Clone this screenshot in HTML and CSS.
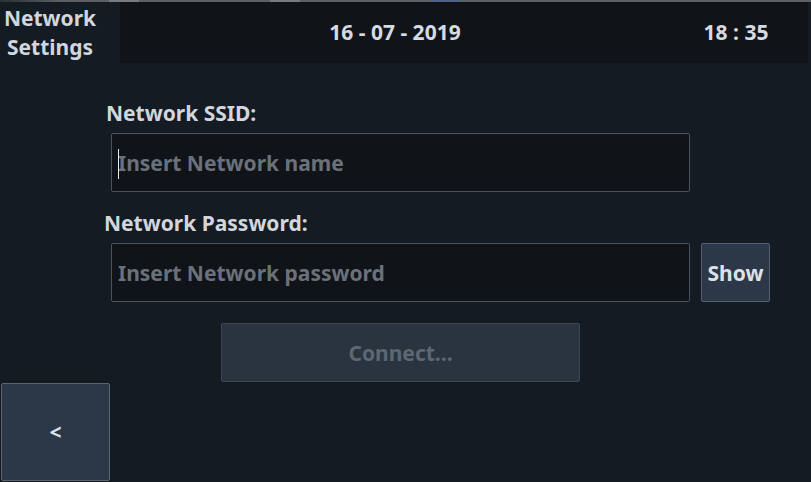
FILE: index.html
```html
<!DOCTYPE html>
<html>
<head>
<meta charset="utf-8">
<link rel="stylesheet" href="styles.css">
</head>
<body>
<div class="screen">
  <div class="topline">
    <span class="seg fade"></span>
    <span class="seg gray" style="width:49px"></span>
    <span class="seg light" style="width:30px"></span>
    <span class="seg gray" style="width:131px"></span>
    <span class="seg light" style="width:30px"></span>
    <span class="seg gray" style="width:130px"></span>
    <span class="seg blue" style="width:30px"></span>
    <span class="seg gray grow"></span>
  </div>
  <div class="header">
    <div class="title">Network<br>Settings</div>
    <div class="bar">
      <div class="date">16 - 07 - 2019</div>
      <div class="time">18 : 35</div>
    </div>
  </div>
  <div class="form">
    <div class="label ssid">Network SSID:</div>
    <div class="row">
      <div class="input"><span class="caret"></span><span class="ph">Insert Network name</span></div>
    </div>
    <div class="label pass">Network Password:</div>
    <div class="row">
      <div class="input"><span class="ph">Insert Network password</span></div>
      <div class="btn show">Show</div>
    </div>
    <div class="connect-row">
      <div class="btn connect">Connect...</div>
    </div>
  </div>
  <div class="back-row">
    <div class="btn back">&lt;</div>
  </div>
</div>
</body>
</html>
```
FILE: styles.css
```css
* { box-sizing: border-box; }
html, body { margin: 0; padding: 0; }
body {
  background: #151b23;
  font-family: "Noto Sans", "Open Sans", sans-serif;
  font-weight: 700;
  color: #d3d7de;
  width: 811px;
  height: 482px;
  overflow: hidden;
}
.screen { width: 811px; height: 482px; display: flex; flex-direction: column; }
.topline { height: 2px; display: flex; }
.seg { display: block; height: 2px; }
.seg.fade { width: 60px; background: linear-gradient(to right, #2a2f34, #5c6064); }
.seg.gray { background: #5c6064; }
.seg.light { background: #777c80; }
.seg.blue { background: #4a6283; }
.seg.grow { flex: 1; }
.header { height: 61px; display: flex; }
.title {
  width: 120px;
  font-size: 21px;
  line-height: 29px;
  text-align: center;
  padding-top: 2px;
  padding-right: 20px;
  color: #d2d6dd;
}
.bar {
  flex: 1;
  margin-right: 3px;
  background: #101418;
  display: flex;
  align-items: center;
  font-size: 21px;
  color: #d6dae1;
}
.date { width: 550px; text-align: center; padding-bottom: 2px; }
.time { flex: 1; text-align: center; padding-bottom: 2px; padding-right: 6px; }
.form { display: flex; flex-direction: column; padding-left: 104px; padding-top: 37px; }
.label { font-size: 21px; line-height: 26px; color: #d2d6dd; }
.label.ssid { padding-left: 2px; margin-bottom: 7px; }
.label.pass { margin-top: 18px; margin-bottom: 7px; }
.row { display: flex; gap: 11px; padding-left: 7px; }
.input {
  width: 579px;
  height: 59px;
  background: #101317;
  border: 1px solid #4a525c;
  border-radius: 2px;
  display: flex;
  align-items: center;
  padding-left: 6px;
  position: relative;
  font-size: 21px;
}
.ph { color: #6b717a; padding-top: 1px; }
.caret {
  position: absolute;
  left: 6px;
  top: 15px;
  width: 1px;
  height: 30px;
  background: #e8eaee;
}
.btn {
  display: flex;
  align-items: center;
  justify-content: center;
  border-radius: 2px;
  font-size: 21px;
}
.show {
  width: 69px;
  height: 59px;
  background: #2c3847;
  border: 1px solid #566272;
  color: #dde1e8;
}
.connect-row { display: flex; padding-left: 117px; margin-top: 21px; }
.connect {
  width: 359px;
  height: 59px;
  background: #29343f;
  border: 1px solid #3b4755;
  color: #5d6774;
}
.back-row { display: flex; padding-left: 1px; margin-top: 1px; }
.back {
  width: 109px;
  height: 98px;
  background: #2c3747;
  border: 1px solid #5a6473;
  color: #dde1e8;
  font-size: 21px;
}
```
